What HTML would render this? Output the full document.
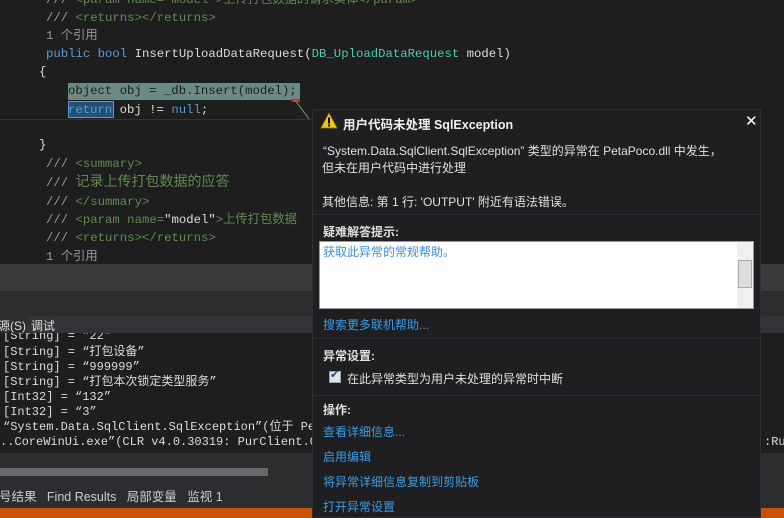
<!DOCTYPE html>
<html><head><meta charset="utf-8"><style>
*{margin:0;padding:0;box-sizing:border-box}
body{width:784px;height:518px;overflow:hidden;background:#1e1e1e;position:relative;font-family:"Liberation Sans","Noto Sans CJK SC",sans-serif}
.c{position:absolute;font-family:"Liberation Mono","Noto Sans CJK SC",monospace;font-size:12.3px;color:#dcdcdc;white-space:pre;line-height:16px}
.g{color:#57a64a}.gg{color:#608b4e}.k{color:#569cd6}.t{color:#4ec9b0}.gr{color:#999}
.o{position:absolute;font-family:"Liberation Mono","Noto Sans CJK SC",monospace;font-size:12px;color:#dcdcdc;white-space:pre;line-height:15px}
.p{position:absolute;font-size:12px;color:#e0e0e0;white-space:nowrap}
.l{color:#3b9ce6}
.b{font-weight:bold}
</style></head><body>
<div class="c" style="left:46px;top:-8px"><span class="gr">/// </span><span class="gg">&lt;param name="model"&gt;上传打包数据的请求实体&lt;/param&gt;</span></div>
<div class="c" style="left:46px;top:10px"><span class="gr">/// </span><span class="gg">&lt;returns&gt;&lt;/returns&gt;</span></div>
<div class="c gr" style="left:46px;top:28px">1 个引用</div>
<div class="c" style="left:46px;top:46px"><span class="k">public bool</span> InsertUploadDataRequest(<span class="t">DB_UploadDataRequest</span> model)</div>
<div class="c" style="left:39px;top:64px">{</div>
<div style="position:absolute;left:68px;top:83px;width:232px;height:17px;background:#6b8a86"></div>
<div style="position:absolute;left:292px;top:99px;width:8px;height:3px;background:#e02020"></div>
<div class="c" style="left:68px;top:83px;color:#1e1e1e">object obj = _db.Insert(model);</div>
<div style="position:absolute;left:68px;top:101px;width:46px;height:17px;background:#264f78;border:1px solid #569cd6"></div>
<div class="c" style="left:68px;top:102px"><span class="k">return</span> obj != <span class="k">null</span>;</div>
<div style="position:absolute;left:0;top:119px;width:312px;height:1px;background:#333"></div>
<div class="c" style="left:39px;top:137px">}</div>
<div class="c" style="left:46px;top:156px"><span class="gr">/// </span><span class="gg">&lt;summary&gt;</span></div>
<div class="c" style="left:46px;top:175px"><span class="gr">/// </span><span class="gg" style="font-size:14px">记录上传打包数据的应答</span></div>
<div class="c" style="left:46px;top:194px"><span class="gr">/// </span><span class="gg">&lt;/summary&gt;</span></div>
<div class="c" style="left:46px;top:212px"><span class="gr">/// </span><span class="gg">&lt;param name=</span>"model"<span class="gg">&gt;上传打包数据</span></div>
<div class="c" style="left:46px;top:230px"><span class="gr">/// </span><span class="gg">&lt;returns&gt;&lt;/returns&gt;</span></div>
<div class="c gr" style="left:46px;top:249px">1 个引用</div>
<div style="position:absolute;left:0;top:264px;width:784px;height:27px;background:#3a3a3d"></div>
<div style="position:absolute;left:0;top:291px;width:784px;height:24px;background:#2d2d30"></div>
<div style="position:absolute;left:0;top:315px;width:784px;height:18px;background:#2d2d30"></div>
<div class="p" style="left:-2px;top:317px;color:#ddd">源(S):</div>
<div style="position:absolute;left:27px;top:316px;width:757px;height:17px;background:#333337"></div>
<div class="p" style="left:31px;top:317px">调试</div>
<div style="position:absolute;left:0;top:333px;width:784px;height:120px;background:#1e1e1e;overflow:hidden">
<div class="o" style="left:3px;top:-4px">[String] = "22"</div>
<div class="o" style="left:3px;top:12px">[String] = “打包设备”</div>
<div class="o" style="left:3px;top:27px">[String] = “999999”</div>
<div class="o" style="left:3px;top:42px">[String] = “打包本次锁定类型服务”</div>
<div class="o" style="left:3px;top:57px">[Int32] = “132”</div>
<div class="o" style="left:3px;top:72px">[Int32] = “3”</div>
<div class="o" style="left:3px;top:87px">“System.Data.SqlClient.SqlException”(位于 PetaPoco.dll 中)</div>
<div class="o" style="left:0px;top:102px">..CoreWinUi.exe”(CLR v4.0.30319: PurClient.CoreWinUi.exe)</div>
<div class="o" style="left:764px;top:102px">:Run</div>
</div>
<div style="position:absolute;left:0;top:453px;width:784px;height:24px;background:#2d2d30"></div>
<div style="position:absolute;left:0;top:468px;width:268px;height:8px;background:#686868"></div>
<div style="position:absolute;left:0;top:477px;width:784px;height:31px;background:#2d2d30"></div>
<div class="p" style="left:-1px;top:486px;color:#ccc;font-size:12.5px">号结果&nbsp;&nbsp; Find Results&nbsp;&nbsp; 局部变量&nbsp;&nbsp; 监视 1</div>
<div style="position:absolute;left:0;top:508px;width:784px;height:10px;background:#ca5100"></div>
<svg style="position:absolute;left:295px;top:100px" width="20" height="20"><line x1="0" y1="0" x2="14" y2="19" stroke="#888" stroke-width="1"/></svg>
<div style="position:absolute;left:312px;top:109px;width:449px;height:409px;background:#1f1f21;border:1px solid #2f2f33"></div>
<svg style="position:absolute;left:320px;top:112px" width="18" height="18"><polygon points="9,1 17,16 1,16" fill="#f5c518" stroke="#a07800" stroke-width=".7"/><rect x="8" y="5.5" width="2" height="6" fill="#000"/><rect x="8" y="12.5" width="2" height="2" fill="#000"/></svg>
<div class="p b" style="left:343px;top:114px;font-size:12.5px;color:#f0f0f0">用户代码未处理 SqlException</div>
<div class="p" style="left:745px;top:112px;font-size:15px;color:#fff">✕</div>
<div class="p" style="left:323px;top:142px">“System.Data.SqlClient.SqlException” 类型的异常在 PetaPoco.dll 中发生，</div>
<div class="p" style="left:322px;top:159px">但未在用户代码中进行处理</div>
<div class="p" style="left:322px;top:193px">其他信息: 第 1 行: 'OUTPUT' 附近有语法错误。</div>
<div style="position:absolute;left:313px;top:214px;width:447px;height:1px;background:#2b2b2f"></div>
<div class="p b" style="left:323px;top:223px">疑难解答提示:</div>
<div style="position:absolute;left:319px;top:241px;width:435px;height:68px;background:#fff;border:1px solid #999"></div>
<div style="position:absolute;left:737px;top:242px;width:16px;height:66px;background:#f0f0f0"></div>
<div style="position:absolute;left:738px;top:260px;width:14px;height:28px;background:#ddd;border:1px solid #aaa"></div>
<div class="p l" style="left:323px;top:243px;color:#3c8fd8">获取此异常的常规帮助。</div>
<div class="p l" style="left:323px;top:316px">搜索更多联机帮助...</div>
<div style="position:absolute;left:313px;top:338px;width:447px;height:1px;background:#2b2b2f"></div>
<div class="p b" style="left:323px;top:347px">异常设置:</div>
<div style="position:absolute;left:329px;top:371px;width:12px;height:12px;background:#dde6f0;border:1px solid #8aa"></div>
<div class="p" style="left:330px;top:368px;color:#2a4a80;font-size:11px">✔</div>
<div class="p" style="left:347px;top:370px">在此异常类型为用户未处理的异常时中断</div>
<div style="position:absolute;left:313px;top:395px;width:447px;height:1px;background:#2b2b2f"></div>
<div class="p b" style="left:323px;top:401px">操作:</div>
<div class="p l" style="left:323px;top:423px">查看详细信息...</div>
<div class="p l" style="left:323px;top:448px">启用编辑</div>
<div class="p l" style="left:323px;top:473px">将异常详细信息复制到剪贴板</div>
<div class="p l" style="left:323px;top:498px">打开异常设置</div>
</body></html>
